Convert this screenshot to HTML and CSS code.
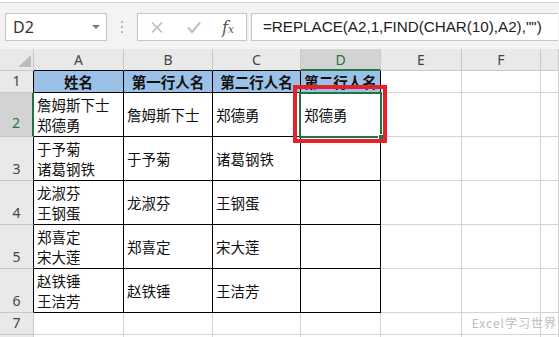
FILE: index.html
```html
<!DOCTYPE html>
<html lang="zh">
<head>
<meta charset="utf-8">
<link rel="stylesheet" href="styles.css">
</head>
<body>
<div class="app">
  <div class="toolbar">
    <div class="namebox">
      <span class="ref">D2</span>
      <span class="caret"></span>
    </div>
    <div class="grip"><i></i><i></i><i></i></div>
    <div class="btns">
      <svg class="ico" width="110" height="26" viewBox="0 0 110 26">
        <path d="M14 8.5 L24 18.5 M24 8.5 L14 18.5" stroke="#bdbdbd" stroke-width="1.6" fill="none"/>
        <path d="M50 13.5 L54 18 L62 8.5" stroke="#c2c2c2" stroke-width="2.2" fill="none"/>
        <text x="84" y="19" class="fx">f</text>
        <text x="90" y="19" class="fxx">x</text>
      </svg>
    </div>
    <div class="formula">=REPLACE(A2,1,FIND(CHAR(10),A2),"")</div>
  </div>
  <div class="sheet">
    <div class="corner"><span class="tri"></span></div>
    <div class="ch">A</div>
    <div class="ch">B</div>
    <div class="ch">C</div>
    <div class="ch sel">D</div>
    <div class="ch">E</div>
    <div class="ch">F</div>
    <div class="ch last"></div>

    <div class="rh tb">1</div>
    <div class="c t hd">姓名</div>
    <div class="c t hd">第一行人名</div>
    <div class="c t hd">第二行人名</div>
    <div class="c t hd">第二行人名</div>
    <div class="c"></div><div class="c"></div><div class="c"></div>

    <div class="rh rsel">2</div>
    <div class="c t">詹姆斯下士<br>郑德勇</div>
    <div class="c t">詹姆斯下士</div>
    <div class="c t">郑德勇</div>
    <div class="c t">郑德勇</div>
    <div class="c"></div><div class="c"></div><div class="c"></div>

    <div class="rh tb">3</div>
    <div class="c t">于予菊<br>诸葛钢铁</div>
    <div class="c t">于予菊</div>
    <div class="c t">诸葛钢铁</div>
    <div class="c t"></div>
    <div class="c"></div><div class="c"></div><div class="c"></div>

    <div class="rh tb">4</div>
    <div class="c t">龙淑芬<br>王钢蛋</div>
    <div class="c t">龙淑芬</div>
    <div class="c t">王钢蛋</div>
    <div class="c t"></div>
    <div class="c"></div><div class="c"></div><div class="c"></div>

    <div class="rh tb">5</div>
    <div class="c t">郑喜定<br>宋大莲</div>
    <div class="c t">郑喜定</div>
    <div class="c t">宋大莲</div>
    <div class="c t"></div>
    <div class="c"></div><div class="c"></div><div class="c"></div>

    <div class="rh tb">6</div>
    <div class="c t">赵铁锤<br>王洁芳</div>
    <div class="c t">赵铁锤</div>
    <div class="c t">王洁芳</div>
    <div class="c t"></div>
    <div class="c"></div><div class="c"></div><div class="c"></div>

    <div class="rh">7</div>
    <div class="c"></div><div class="c"></div><div class="c"></div><div class="c"></div>
    <div class="c"></div><div class="c"></div><div class="c"></div>

    <div class="rh"></div>
    <div class="c"></div><div class="c"></div><div class="c"></div><div class="c"></div>
    <div class="c"></div><div class="c"></div><div class="c"></div>

    <div class="cursor"><span class="handle"></span></div>
    <div class="mark"></div>
  </div>
  <div class="wm">Excel学习世界</div>
</div>
</body>
</html>
```

FILE: styles.css
```css
* { box-sizing: border-box; }
html, body { margin: 0; padding: 0; }
body {
  width: 559px;
  height: 337px;
  overflow: hidden;
  background: #ffffff;
  font-family: "Noto Sans CJK SC", "Noto Sans", sans-serif;
}
.app { position: relative; width: 559px; height: 337px; overflow: hidden; }

.toolbar {
  margin-top: 2px;
  height: 47px;
  border-top: 1px solid #d6d6d6;
  background: #f3f3f3;
  display: flex;
  align-items: flex-start;
  padding: 10px 0 0 5px;
}
.namebox {
  width: 102px;
  height: 28px;
  background: #fff;
  border: 1px solid #c6c6c6;
  display: flex;
  align-items: center;
  justify-content: space-between;
  padding: 0 6px 0 7px;
}
.ref {
  font-family: "Noto Sans", sans-serif;
  font-size: 16px;
  color: #333;
}
.caret {
  width: 0; height: 0;
  border-left: 4px solid transparent;
  border-right: 4px solid transparent;
  border-top: 4px solid #7a7a7a;
}
.grip {
  width: 30px;
  height: 28px;
  display: flex;
  flex-direction: column;
  align-items: center;
  justify-content: center;
  gap: 3px;
}
.grip i {
  display: block;
  width: 2px;
  height: 2px;
  background: #b5b5b5;
}
.btns {
  width: 110px;
  height: 28px;
  background: #fff;
  border: 1px solid #c6c6c6;
  margin-right: 4px;
}
.ico { display: block; }
.fx {
  font-family: "DejaVu Serif", "Liberation Serif", serif;
  font-style: italic;
  font-size: 16px;
  fill: #555;
}
.fxx {
  font-family: "DejaVu Serif", "Liberation Serif", serif;
  font-style: italic;
  font-size: 10.5px;
  fill: #555;
}
.formula {
  width: 307px;
  height: 28px;
  background: #fff;
  border: 1px solid #c6c6c6;
  border-right: none;
  padding-left: 11px;
  font-family: "Liberation Sans", sans-serif;
  font-size: 15.2px;
  line-height: 26px;
  color: #222;
  white-space: nowrap;
  overflow: hidden;
}

.sheet {
  position: relative;
  display: grid;
  grid-template-columns: 34px 90px 89px 88px 80px 81px 79px 1fr;
  grid-template-rows: 22px 22px 44px 44px 44px 44px 44px 22px 22px;
}
.corner {
  position: relative;
  background: #e9e9e9;
  border-right: 1px solid #c8c8c8;
  border-bottom: 1px solid #c8c8c8;
}
.tri {
  position: absolute;
  right: 2px;
  bottom: 3px;
  width: 0; height: 0;
  border-left: 13px solid transparent;
  border-bottom: 12px solid #bcbcbc;
}
.ch {
  background: #e9e9e9;
  border-right: 1px solid #c8c8c8;
  border-bottom: 1px solid #000;
  text-align: center;
  font-family: "Noto Sans", sans-serif;
  font-size: 14px;
  line-height: 21px;
  color: #444;
}
.ch:nth-child(n+6) { border-bottom-color: #c8c8c8; }
.ch.sel {
  background: #d3d3d3;
  color: #217346;
  border-bottom: 2px solid #217346;
}
.rh {
  background: #e9e9e9;
  border-right: 1px solid #c8c8c8;
  border-bottom: 1px solid #c8c8c8;
  font-family: "Noto Sans", sans-serif;
  font-size: 14px;
  line-height: 20px;
  color: #444;
  text-align: center;
  display: flex;
  align-items: flex-end;
  justify-content: center;
  padding-bottom: 1px;
}
.rh.tb { border-right-color: #000; }
.rh.rsel {
  background: #d3d3d3;
  color: #217346;
  border-right: 2px solid #217346;
  padding-bottom: 3px;
}
.c {
  border-right: 1px solid #d4d4d4;
  border-bottom: 1px solid #d4d4d4;
  font-size: 14.5px;
  line-height: 20px;
  color: #111;
  display: flex;
  align-items: center;
  padding-left: 3px;
  white-space: nowrap;
  overflow: hidden;
}
.c.t { border-right-color: #000; border-bottom-color: #000; }
.c.hd {
  background: #9bc2e6;
  font-weight: 700;
  justify-content: center;
  padding-left: 0;
}

.cursor {
  position: absolute;
  left: 299px;
  top: 43px;
  width: 83px;
  height: 46px;
  border: 2px solid #217346;
}
.handle {
  position: absolute;
  right: -4px;
  bottom: -4px;
  width: 6px;
  height: 6px;
  background: #217346;
  border: 1px solid #fff;
}
.mark {
  position: absolute;
  left: 293px;
  top: 36px;
  width: 94px;
  height: 58px;
  border: 4px solid #e8202a;
}
.wm {
  position: absolute;
  right: 2px;
  bottom: 7px;
  font-family: "Noto Sans CJK SC", sans-serif;
  font-size: 12px;
  line-height: 14px;
  color: #bdbdbd;
  letter-spacing: 1px;
}
```
